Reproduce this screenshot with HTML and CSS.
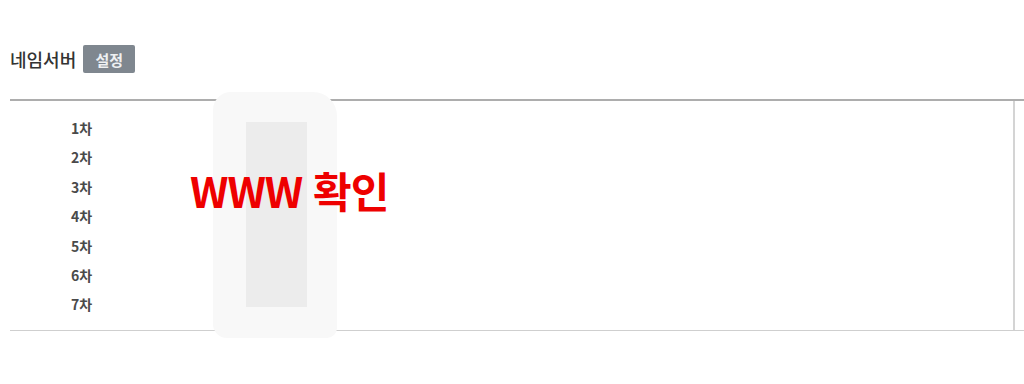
FILE: index.html
```html
<!DOCTYPE html>
<html lang="ko">
<head>
<meta charset="utf-8">
<link rel="stylesheet" href="styles.css">
</head>
<body>
<div class="page">
  <div class="head">
    <span class="title">네임서버</span>
    <span class="badge">설정</span>
  </div>
  <div class="table">
    <div class="labels">
      <div class="row">1차</div>
      <div class="row">2차</div>
      <div class="row">3차</div>
      <div class="row">4차</div>
      <div class="row">5차</div>
      <div class="row">6차</div>
      <div class="row">7차</div>
    </div>
    <div class="values"></div>
    <div class="extra"></div>
  </div>
  <div class="redact"><div class="redact-inner"></div></div>
  <div class="note">WWW 확인</div>
</div>
</body>
</html>
```
FILE: styles.css
```css
html, body {
  margin: 0;
  padding: 0;
  background: #fff;
  overflow: hidden;
}
body {
  width: 1024px;
  height: 384px;
  font-family: "Noto Sans CJK KR", "Noto Sans", sans-serif;
  color: #333;
}
.page {
  position: relative;
  padding: 45px 0 0 10px;
}
.head {
  display: flex;
  align-items: center;
  gap: 7px;
  height: 28px;
}
.title {
  font-size: 18px;
  font-weight: 500;
  color: #333;
}
.badge {
  display: flex;
  align-items: center;
  justify-content: center;
  width: 52px;
  height: 28px;
  background: #7f878f;
  color: #eef0f2;
  font-size: 15px;
  font-weight: 700;
  border-radius: 2px;
}
.table {
  display: flex;
  margin-top: 26px;
  width: 1030px;
  border-top: 2px solid #adadad;
  border-bottom: 1px solid #cfcfcf;
}
.labels {
  width: 166px;
  padding: 13px 0 10px;
  display: flex;
  flex-direction: column;
}
.row {
  height: 29.4px;
  line-height: 29.4px;
  padding-left: 61px;
  font-size: 14px;
  font-weight: 700;
  color: #4a4a4a;
}
.values {
  width: 837px;
}
.extra {
  flex: 1;
  border-left: 2px solid #d4d4d4;
}
.redact {
  position: absolute;
  left: 213px;
  top: 92px;
  width: 124px;
  height: 246px;
  background: #f8f8f8;
  border-radius: 18px 24px 10px 14px;
}
.redact-inner {
  position: absolute;
  left: 33px;
  top: 30px;
  width: 61px;
  height: 185px;
  background: #ececec;
}
.note {
  position: absolute;
  left: 190px;
  top: 162px;
  font-size: 42px;
  line-height: 56px;
  font-weight: 700;
  color: #ee0000;
  letter-spacing: -1px;
}
```
